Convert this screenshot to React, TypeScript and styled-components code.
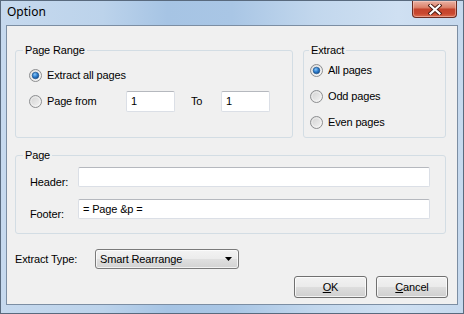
import styled, { createGlobalStyle } from "styled-components";

const GlobalStyle = createGlobalStyle`
  html, body {
    margin: 0;
    padding: 0;
    background: #ffffff;
  }
  * {
    box-sizing: border-box;
  }
`;

const Window = styled.div`
  width: 464px;
  height: 314px;
  border: 1px solid #596a7e;
  display: flex;
  flex-direction: column;
  padding: 0 5px 8px 5px;
  background: linear-gradient(
    to right,
    #c6d9ee 0%,
    #bcd3eb 22%,
    #a6c4e4 36%,
    #a9c6e5 50%,
    #c2d7ed 68%,
    #cfe0f2 86%,
    #c6d9ee 100%
  );
  font-family: "Liberation Sans", Arial, sans-serif;
  font-size: 11px;
  letter-spacing: -0.15px;
  color: #000;
`;

const TitleBar = styled.div`
  height: 24px;
  display: flex;
  justify-content: space-between;
  align-items: flex-start;
`;

const Title = styled.div`
  padding: 3px 0 0 1px;
  font-family: "Noto Sans", "Open Sans", sans-serif;
  font-size: 12px;
  line-height: 16px;
  letter-spacing: 0;
  color: #000;
`;

const CloseButton = styled.div`
  width: 45px;
  height: 17px;
  margin-right: 1px;
  border: 1px solid #6a2c22;
  border-top: none;
  border-radius: 0 0 4px 4px;
  background: linear-gradient(
    #eab2a4 0%,
    #dc826b 40%,
    #c4432c 52%,
    #c9482f 78%,
    #db6c4f 100%
  );
  box-shadow: inset 0 0 0 1px rgba(255, 220, 210, 0.45);
  display: flex;
  align-items: center;
  justify-content: center;
`;

const Client = styled.div`
  flex: 1;
  border: 1px solid #7c8ea3;
  background: #f0f0f0;
  padding: 18px 9px 6px 8px;
  display: flex;
  flex-direction: column;
`;

const Groups = styled.div`
  display: flex;
  flex-direction: column;
  gap: 11px;
  padding-right: 2px;
`;

const TopRow = styled.div`
  display: flex;
  gap: 10px;
  align-items: stretch;
`;

const Group = styled.fieldset<{ $w?: number; $pad: string; $gap: number }>`
  margin: 0;
  ${(p) => (p.$w ? `width: ${p.$w}px;` : "flex: 1;")}
  border: 1px solid #d3dde4;
  border-radius: 3px;
  padding: ${(p) => p.$pad};
  display: flex;
  flex-direction: column;
  gap: ${(p) => p.$gap}px;
  min-width: 0;
`;

const Legend = styled.legend<{ $ml: number }>`
  padding: 0 2px;
  margin-left: ${(p) => p.$ml}px;
  line-height: 13px;
  font-size: 11px;
`;

const Row = styled.div<{ $h: number }>`
  display: flex;
  align-items: center;
  height: ${(p) => p.$h}px;
`;

const RadioLabel = styled.span<{ $w?: number }>`
  margin-left: 5px;
  ${(p) => (p.$w ? `width: ${p.$w}px;` : "")}
  white-space: nowrap;
`;

const TextBox = styled.input<{ $w?: number }>`
  ${(p) => (p.$w ? `width: ${p.$w}px;` : "flex: 1;")}
  height: ${(p) => (p.$w ? 21 : 20)}px;
  border: 1px solid #dbdfe6;
  border-top-color: #b5b8be;
  border-radius: 2px;
  background: #fff;
  padding: 0 4px;
  font-family: "Liberation Sans", Arial, sans-serif;
  font-size: 11px;
  letter-spacing: -0.15px;
  color: #000;
  outline: none;
`;

const SideText = styled.span<{ $w: number }>`
  width: ${(p) => p.$w}px;
  padding-left: 16px;
`;

const FieldLabel = styled.span`
  width: 48px;
  align-self: flex-end;
  margin-bottom: -1px;
`;

const TypeRow = styled.div`
  display: flex;
  align-items: center;
  margin-top: 15px;
  height: 20px;
`;

const TypeLabel = styled.span`
  width: 80px;
`;

const Combo = styled.div`
  width: 144px;
  height: 20px;
  border: 1px solid #7a7a7a;
  border-radius: 3px;
  background: linear-gradient(#f3f3f3 0%, #ececec 48%, #dfdfdf 52%, #d2d2d2 100%);
  box-shadow: inset 0 0 0 1px rgba(255, 255, 255, 0.7);
  display: flex;
  align-items: center;
  justify-content: space-between;
  padding: 0 6px 0 4px;
`;

const ButtonRow = styled.div`
  display: flex;
  justify-content: flex-end;
  gap: 9px;
  margin-top: 7px;
`;

const Button = styled.div<{ $w: number }>`
  width: ${(p) => p.$w}px;
  height: 22px;
  border: 1px solid #707070;
  border-radius: 3px;
  background: linear-gradient(#f2f2f2 0%, #ebebeb 48%, #dddddd 52%, #cfcfcf 100%);
  box-shadow: inset 0 0 0 1px rgba(255, 255, 255, 0.75);
  display: flex;
  align-items: center;
  justify-content: center;
`;

function Radio({ checked }: { checked?: boolean }) {
  return (
    <svg width="13" height="13" viewBox="0 0 13 13">
      <defs>
        <linearGradient id="rbg" x1="0" y1="0" x2="1" y2="1">
          <stop offset="0" stopColor="#cfcfcf" />
          <stop offset="1" stopColor="#f6f6f6" />
        </linearGradient>
        <radialGradient id="rdot" cx="0.4" cy="0.35" r="0.7">
          <stop offset="0" stopColor="#8cc8f6" />
          <stop offset="0.5" stopColor="#2f7fd0" />
          <stop offset="1" stopColor="#134b8a" />
        </radialGradient>
      </defs>
      <circle cx="6.5" cy="6.5" r="6" fill="url(#rbg)" stroke="#8d8e90" strokeWidth="1" />
      <circle cx="6.5" cy="6.5" r="4.6" fill="none" stroke="#ffffff" strokeWidth="0.8" opacity="0.6" />
      {checked && <circle cx="6.5" cy="6.5" r="3.3" fill="url(#rdot)" stroke="#1b4f85" strokeWidth="0.6" />}
    </svg>
  );
}

function CloseGlyph() {
  return (
    <svg width="14" height="11" viewBox="0 0 14 11">
      <path d="M2.5 1.5 L11.5 9.5 M11.5 1.5 L2.5 9.5" stroke="#4a1a12" strokeWidth="4" strokeLinecap="square" />
      <path d="M2.5 1.5 L11.5 9.5 M11.5 1.5 L2.5 9.5" stroke="#ffffff" strokeWidth="2.2" strokeLinecap="square" />
    </svg>
  );
}

function ComboArrow() {
  return (
    <svg width="7" height="4" viewBox="0 0 7 4">
      <path d="M0 0 H7 L3.5 4 Z" fill="#000" />
    </svg>
  );
}

export default function App() {
  return (
    <>
      <GlobalStyle />
      <Window>
        <TitleBar>
          <Title>Option</Title>
          <CloseButton>
            <CloseGlyph />
          </CloseButton>
        </TitleBar>
        <Client>
          <Groups>
            <TopRow>
              <Group $w={278} $pad="7px 0 25px 13px" $gap={4}>
                <Legend $ml={-6}>Page Range</Legend>
                <Row $h={22}>
                  <Radio checked />
                  <RadioLabel>Extract all pages</RadioLabel>
                </Row>
                <Row $h={22}>
                  <Radio />
                  <RadioLabel $w={79}>Page from</RadioLabel>
                  <TextBox $w={49} readOnly value="1" />
                  <SideText $w={46}>To</SideText>
                  <TextBox $w={49} readOnly value="1" />
                </Row>
              </Group>
              <Group $pad="2px 0 4px 6px" $gap={4}>
                <Legend $ml={-1}>Extract</Legend>
                <Row $h={22}>
                  <Radio checked />
                  <RadioLabel>All pages</RadioLabel>
                </Row>
                <Row $h={22}>
                  <Radio />
                  <RadioLabel>Odd pages</RadioLabel>
                </Row>
                <Row $h={22}>
                  <Radio />
                  <RadioLabel>Even pages</RadioLabel>
                </Row>
              </Group>
            </TopRow>
            <Group $pad="5px 15px 14px 14px" $gap={12}>
              <Legend $ml={-7}>Page</Legend>
              <Row $h={20}>
                <FieldLabel>Header:</FieldLabel>
                <TextBox readOnly value="" />
              </Row>
              <Row $h={20}>
                <FieldLabel>Footer:</FieldLabel>
                <TextBox readOnly value="= Page &p =" />
              </Row>
            </Group>
          </Groups>
          <TypeRow>
            <TypeLabel>Extract Type:</TypeLabel>
            <Combo>
              <span>Smart Rearrange</span>
              <ComboArrow />
            </Combo>
          </TypeRow>
          <ButtonRow>
            <Button $w={73}>
              <span>
                <u>O</u>K
              </span>
            </Button>
            <Button $w={72}>
              <span>
                <u>C</u>ancel
              </span>
            </Button>
          </ButtonRow>
        </Client>
      </Window>
    </>
  );
}
